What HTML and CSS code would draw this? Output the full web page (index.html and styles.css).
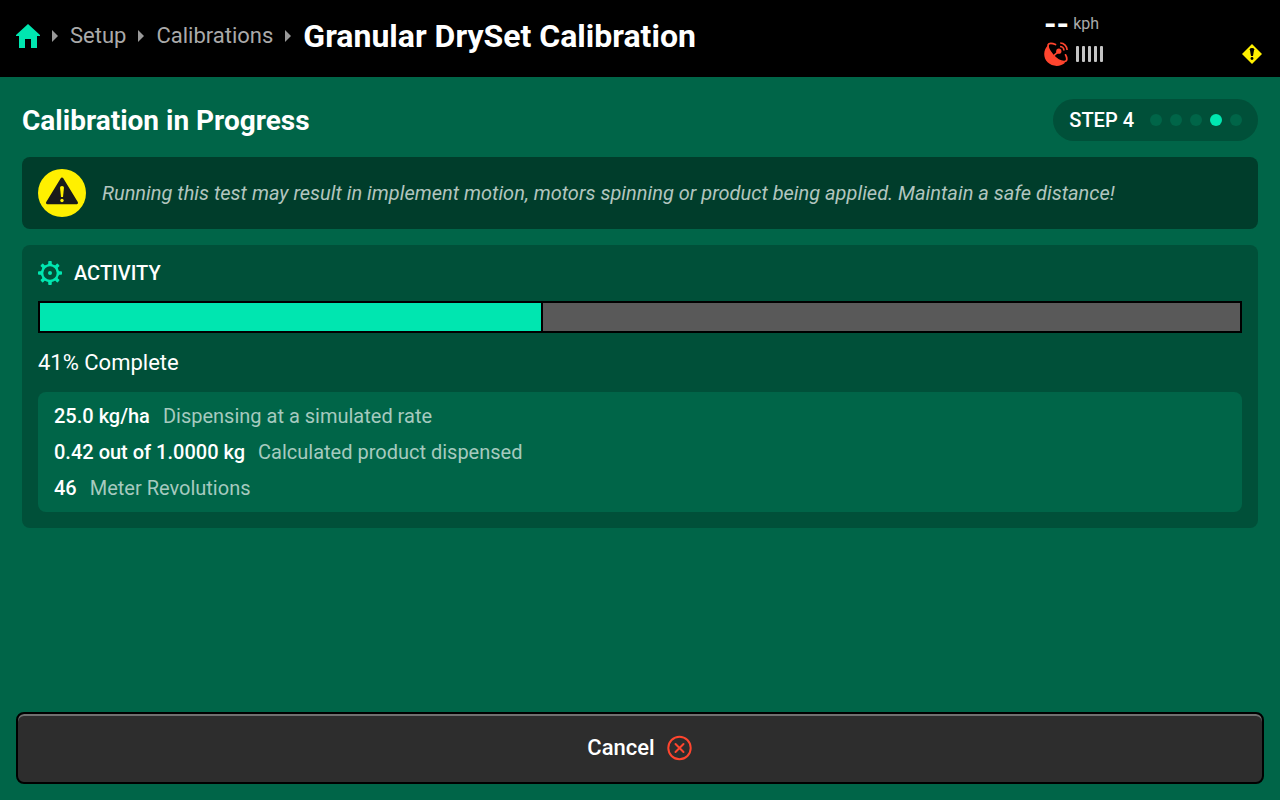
FILE: index.html
```html
<!DOCTYPE html>
<html lang="en">
<head>
<meta charset="utf-8">
<meta name="viewport" content="width=device-width, initial-scale=1">
<title>Granular DrySet Calibration</title>
<link rel="stylesheet" href="styles.css">
</head>
<body>
<header class="topbar">
  <nav class="crumbs" aria-label="Breadcrumb">
    <a class="crumb-home" href="#home" aria-label="Home">
      <svg class="icon" width="24" height="24" viewBox="0 0 24 24" fill="currentColor"><path d="M12 0 24 11v1h-3v12h-6v-9H9v9H3V12H0v-1z"/></svg>
    </a>
    <svg class="icon arrow" width="6" height="12" viewBox="0 0 6 12" fill="currentColor"><path d="M0 0 6 6 0 12z"/></svg>
    <a class="crumb" href="#setup">Setup</a>
    <svg class="icon arrow" width="6" height="12" viewBox="0 0 6 12" fill="currentColor"><path d="M0 0 6 6 0 12z"/></svg>
    <a class="crumb" href="#calibrations">Calibrations</a>
    <svg class="icon arrow" width="6" height="12" viewBox="0 0 6 12" fill="currentColor"><path d="M0 0 6 6 0 12z"/></svg>
    <h1 class="page-title">Granular DrySet Calibration</h1>
  </nav>
  <div class="status">
    <div class="speed"><span class="speed-value">--</span><span class="speed-unit">kph</span></div>
    <div class="signal">
      <svg class="icon" width="24" height="24" viewBox="0 0 24 24" fill="none" stroke="#ff452e">
        <path d="M4.600 2.800C-.8 7-1.300 15.500 3.600 20.300c4.800 4.600 12.800 4.900 17.800.2C13.500 19.500 4 11 4.600 2.800z" fill="#ff452e" stroke="none"/>
        <path d="M11.500 2.600C8 .9 4.800.9 4.200 2.600 2.700 7.500 12.500 19.800 20.300 19.500c3.400-.2 3-3.700 1.200-6.700" stroke-width="1.700" stroke-linecap="round"/>
        <path d="M9.500 13.800 14.800 9.400" stroke-width="1.600"/>
        <circle cx="14.800" cy="9.200" r="2.600" fill="#ff452e" stroke="none"/>
        <path d="M16 4.500c2.200 0 3.900 1.700 3.900 3.900M16.200 1c3.800 0 6.900 3.100 6.900 7" stroke-width="1.700"/>
      </svg>
      <svg class="icon bars" width="28" height="16" viewBox="0 0 28 16" fill="currentColor"><rect width="3" height="16" rx="1"/><rect x="6" width="3" height="16" rx="1"/><rect x="12" width="3" height="16" rx="1"/><rect x="18" width="3" height="16" rx="1"/><rect x="24" width="3" height="16" rx="1"/></svg>
    </div>
  </div>
  <svg class="icon alert" width="20" height="20" viewBox="0 0 20 20"><path d="M10 0 20 10 10 20 0 10z" fill="#fff000"/><path d="M7.800 5.200Q7.800 4 10 4t2.200 1.200L11 12H9z"/><circle cx="10" cy="14.500" r="1.400"/></svg>
</header>
<main class="content">
  <div class="heading">
    <h2 class="section-title">Calibration in Progress</h2>
    <div class="steps">
      <span class="step-label">STEP 4</span>
      <span class="dots"><i class="dot"></i><i class="dot"></i><i class="dot"></i><i class="dot dot-on"></i><i class="dot"></i></span>
    </div>
  </div>
  <div class="warning">
    <svg class="icon" width="48" height="48" viewBox="0 0 48 48"><circle cx="24" cy="24" r="24" fill="#fff000"/><path d="M24 10 38.500 33.800h-29z" fill="#1a1a1a" stroke="#1a1a1a" stroke-width="3" stroke-linejoin="round"/><path d="M22 18.500q0-1.500 2-1.500t2 1.500L25 28h-2z" fill="#fff000"/><circle cx="24" cy="31.500" r="1.700" fill="#fff000"/></svg>
    <p class="warning-text">Running this test may result in implement motion, motors spinning or product being applied. Maintain a safe distance!</p>
  </div>
  <section class="activity">
    <div class="activity-head">
      <svg class="icon gear" width="24" height="24" viewBox="0 0 24 24" fill="currentColor">
        <circle cx="12" cy="12" r="7.900" fill="none" stroke="currentColor" stroke-width="2.400"/>
        <circle cx="12" cy="12" r="2"/>
        <path id="tooth" d="M9 4.500 10.300 2.600 10.200.9Q10.200 0 11 0h2q.8 0 .8.9l-.1 1.700L15 4.500z"/>
        <use href="#tooth" transform="rotate(45 12 12)"/><use href="#tooth" transform="rotate(90 12 12)"/><use href="#tooth" transform="rotate(135 12 12)"/><use href="#tooth" transform="rotate(180 12 12)"/><use href="#tooth" transform="rotate(225 12 12)"/><use href="#tooth" transform="rotate(270 12 12)"/><use href="#tooth" transform="rotate(315 12 12)"/>
      </svg>
      <h3 class="activity-title">ACTIVITY</h3>
    </div>
    <div class="progress" role="progressbar" aria-label="Calibration progress" aria-valuemin="0" aria-valuemax="100" aria-valuenow="41"><div class="progress-fill" style="width:41.880%"></div></div>
    <p class="progress-text">41% Complete</p>
    <dl class="readings">
      <div class="reading"><dt>25.0 kg/ha</dt><dd>Dispensing at a simulated rate</dd></div>
      <div class="reading"><dt>0.42 out of 1.0000 kg</dt><dd>Calculated product dispensed</dd></div>
      <div class="reading"><dt>46</dt><dd>Meter Revolutions</dd></div>
    </dl>
  </section>
</main>
<footer class="actions">
  <button class="cancel" type="button">Cancel
    <svg class="icon" width="26" height="26" viewBox="0 0 26 26" fill="none" stroke="#ff452e" stroke-width="2"><circle cx="12.500" cy="13" r="11.200"/><path d="m8.500 9 8 8m0-8-8 8" stroke-linecap="round"/></svg>
  </button>
</footer>
</body>
</html>
```

FILE: styles.css
```css
* { box-sizing: border-box; }

body {
  margin: 0;
  min-height: 100vh;
  display: flex;
  flex-direction: column;
  background: #006548;
  color: #fff;
  font-family: Roboto, "Liberation Sans", sans-serif;
  font-size: 20px;
  line-height: 24px;
}

h1, h2, h3, p, dl, dt, dd { margin: 0; }

.icon { display: block; flex: none; }

.topbar {
  display: flex;
  align-items: center;
  min-height: 77px;
  padding: 0 18px 0 16px;
  background: #000;
}

.crumbs {
  flex: 1;
  display: flex;
  align-items: center;
  gap: 12px;
  padding-bottom: 5px;
}

.crumb-home { color: #00e6b0; }
.arrow { color: #999; }
.crumb { color: #aaa; font-size: 22px; text-decoration: none; }
.page-title { font-size: 32px; line-height: 38px; font-weight: 700; }

.status { width: 198px; }

.speed {
  display: flex;
  align-items: center;
  gap: 4px;
  font-size: 16px;
}

.speed-value { font-size: 32px; font-weight: 700; }
.speed-unit { color: #aaa; }

.signal { display: flex; align-items: center; gap: 8px; margin-top: 6px; }
.bars { color: #c4c4c4; }
.alert { margin-top: 30px; }

.content { flex: 1; padding: 22px; }

.heading {
  display: flex;
  align-items: center;
  justify-content: space-between;
  margin-bottom: 16px;
}

.section-title { font-size: 28px; line-height: 33px; font-weight: 700; }

.steps {
  display: flex;
  align-items: center;
  gap: 16px;
  height: 42px;
  padding: 0 16px;
  border-radius: 21px;
  background: #005039;
}

.step-label { font-weight: 500; }
.dots { display: flex; gap: 8px; }
.dot { width: 12px; height: 12px; border-radius: 50%; background: #006548; }
.dot-on { background: #00e6b0; }

.warning {
  display: flex;
  align-items: center;
  gap: 16px;
  padding: 12px 16px;
  margin-bottom: 16px;
  border-radius: 8px;
  background: #003d2b;
}

.warning-text { color: #b2c5bf; font-style: italic; }

.activity { padding: 16px; border-radius: 8px; background: #005039; }
.activity-head { display: flex; align-items: center; gap: 12px; }
.gear { color: #00e6b0; }
.activity-title { font-size: 20px; font-weight: 500; }

.progress {
  height: 32px;
  margin-top: 16px;
  border: 2px solid #000;
  background: #595959;
}

.progress-fill { height: 100%; border-right: 2px solid #000; background: #00e6b0; }

.progress-text { margin: 16px 0; font-size: 22px; line-height: 27px; }

.readings {
  display: flex;
  flex-direction: column;
  gap: 12px;
  padding: 12px 16px;
  border-radius: 8px;
  background: #006548;
}

.reading { display: flex; flex-wrap: wrap; column-gap: 13px; }
.reading dt { font-weight: 500; }
.reading dd { color: #a6cabf; }

.actions { padding: 16px; }

.cancel {
  display: flex;
  align-items: center;
  justify-content: center;
  gap: 12px;
  width: 100%;
  height: 72px;
  border: 2px solid #000;
  border-radius: 8px;
  background: #2d2d2d;
  box-shadow: inset 0 2px #707070;
  color: #fff;
  font: 500 22px/28px Roboto, "Liberation Sans", sans-serif;
}
```
